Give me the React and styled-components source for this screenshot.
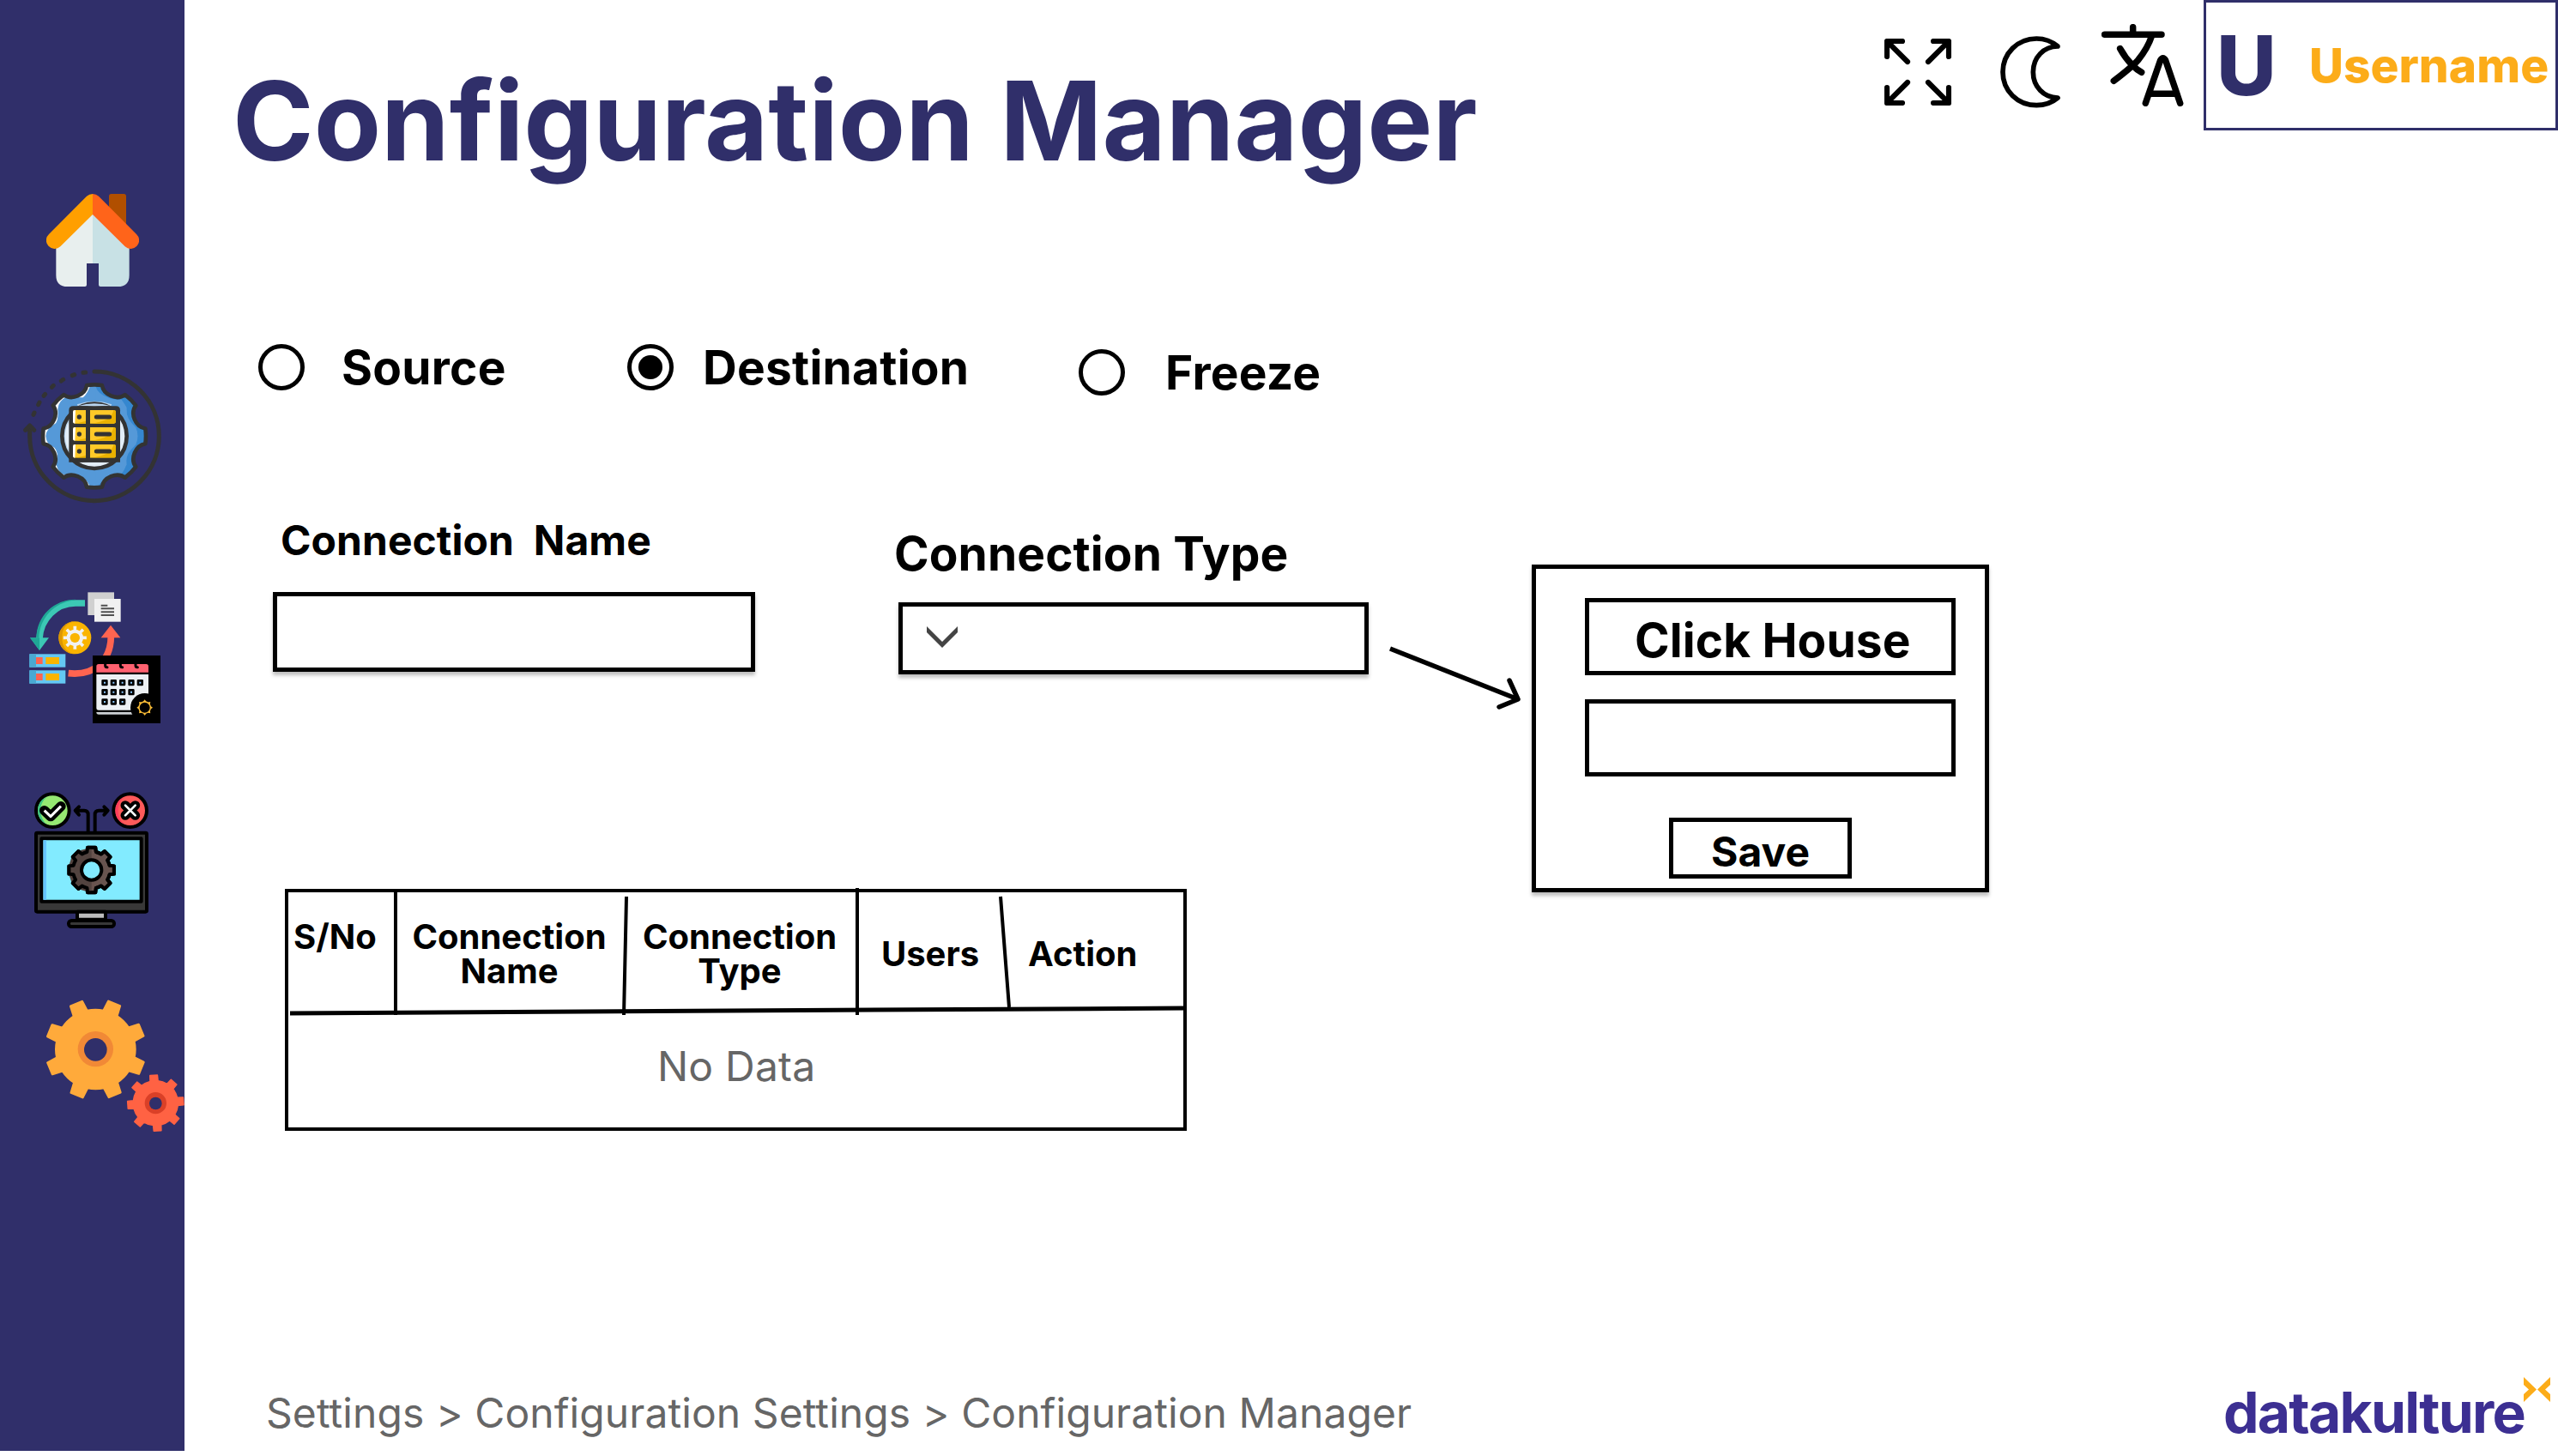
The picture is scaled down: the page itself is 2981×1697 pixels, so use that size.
import React from 'react';
import styled, { createGlobalStyle } from 'styled-components';

const GlobalStyle = createGlobalStyle`
  * { box-sizing: border-box; }
  body {
    margin: 0;
    background: #fff;
    color: #000;
    font-family: Inter, "Liberation Sans", sans-serif;
  }
`;

const NAVY = '#302f6a';
const AMBER = '#fcac19';
const GREY = '#666';

const Page = styled.div`
  display: flex;
  align-items: flex-start;
  width: 2981px;
  height: 1697px;
  overflow: hidden;
`;

const Sidebar = styled.nav`
  display: flex;
  flex-direction: column;
  flex: none;
  width: 215px;
  height: 1691px;
  padding-top: 226px;
  background: ${NAVY};
`;

const NavButton = styled.a`
  display: block;
  flex: none;
  width: ${(p) => p.$w}px;
  height: ${(p) => p.$h}px;
  margin: 0 0 ${(p) => p.$after || 0}px ${(p) => p.$indent}px;

  svg {
    display: block;
    width: 100%;
    height: 100%;
  }
`;

const Main = styled.main`
  display: flex;
  flex-direction: column;
  flex: 1;
  height: 1697px;
`;

const Header = styled.header`
  display: flex;
  align-items: flex-start;
  height: 401px;
`;

const Title = styled.h1`
  margin: 77px auto 0 56px;
  color: ${NAVY};
  font-size: 128px;
  font-weight: 700;
  line-height: 128px;
  letter-spacing: -0.05px;
  white-space: nowrap;
`;

const ToolIcon = styled.svg`
  display: block;
  flex: none;
  width: ${(p) => p.$w}px;
  height: ${(p) => p.$h}px;
  margin: ${(p) => p.$top}px ${(p) => p.$after}px 0 0;
  stroke: #000;
  fill: none;
  stroke-linecap: round;
  stroke-linejoin: round;
`;

const UserBox = styled.div`
  display: flex;
  align-items: center;
  width: 413px;
  height: 152px;
  padding: 0 0 0 12px;
  border: 3px solid ${NAVY};
`;

const Initial = styled.span`
  width: 108px;
  color: ${NAVY};
  font-size: 96px;
  font-weight: 800;
  line-height: 96px;
`;

const Username = styled.span`
  color: ${AMBER};
  font-size: 55px;
  font-weight: 800;
  line-height: 56px;
  white-space: nowrap;
`;

const RadioGroup = styled.div`
  display: flex;
  align-items: flex-start;
  height: 204px;
  padding-left: 86px;
`;

const Radio = styled.label`
  display: flex;
  align-items: center;
  gap: ${(p) => p.$gap}px;
  width: ${(p) => p.$width}px;
  height: 54px;
  margin-top: ${(p) => p.$drop || 0}px;
  font-size: 55px;
  font-weight: 700;
  line-height: 54px;
  letter-spacing: 0.25px;
  white-space: nowrap;
`;

const Dot = styled.span`
  display: grid;
  place-items: center;
  flex: none;
  width: 54px;
  height: 54px;
  border: 5px solid #000;
  border-radius: 50%;

  &::after {
    content: '';
    width: 28px;
    height: 28px;
    border-radius: 50%;
    background: ${(p) => (p.$on ? '#000' : 'transparent')};
  }
`;

const Body = styled.section`
  display: flex;
  align-items: flex-start;
  height: 1030px;
  padding-left: 103px;
`;

const Column = styled.div`
  display: flex;
  flex-direction: column;
  width: 1300px;
`;

const Fields = styled.div`
  display: flex;
  align-items: flex-start;
  height: 431px;
`;

const Field = styled.div`
  display: flex;
  flex-direction: column;
  width: ${(p) => p.$width}px;
  padding-top: ${(p) => p.$top}px;
`;

const FieldLabel = styled.label`
  margin: 0 0 ${(p) => p.$after}px ${(p) => p.$indent}px;
  font-size: ${(p) => p.$size}px;
  font-weight: 700;
  line-height: ${(p) => p.$line}px;
  letter-spacing: ${(p) => p.$track || 0}px;
  white-space: pre;
`;

const Control = styled.div`
  display: flex;
  align-items: center;
  width: ${(p) => p.$w}px;
  height: ${(p) => p.$h}px;
  border: 5px solid #000;
  background: #fff;
  box-shadow: 0 4px 4px rgba(0, 0, 0, 0.25);

  svg {
    display: block;
    width: 36px;
    height: 25px;
    margin: 0 0 3px 28px;
  }
`;

const Arrow = styled.svg`
  display: block;
  flex: none;
  width: 154px;
  height: 76px;
  margin: 147px 13px 0 0;
`;

const Panel = styled.section`
  display: flex;
  flex-direction: column;
  width: 533px;
  height: 382px;
  margin-top: 53px;
  padding: 34px 0 0 57px;
  border: 5px solid #000;
  background: #fff;
  box-shadow: 0 4px 4px rgba(0, 0, 0, 0.25);
`;

const Choice = styled.div`
  width: 432px;
  height: 90px;
  margin-bottom: 28px;
  padding-left: 53px;
  border: 5px solid #000;
  font-size: 55px;
  font-weight: 700;
  line-height: 88px;
  letter-spacing: 0.1px;
  white-space: nowrap;
`;

const SaveButton = styled.button`
  width: 213px;
  height: 71px;
  margin: 20px 0 0 98px;
  padding: 2px 0 0;
  border: 5px solid #000;
  background: #fff;
  color: #000;
  font: 700 48px/66px Inter, "Liberation Sans", sans-serif;
`;

const TableBox = styled.div`
  position: relative;
  display: flex;
  flex-direction: column;
  width: 1051px;
  height: 282px;
  margin-left: 14px;
  border: 4px solid #000;
`;

const HeadRow = styled.div`
  display: grid;
  grid-template-columns: 125px 265px 272px 172px 209px;
  height: 140px;
`;

const HeadCell = styled.div`
  padding-top: ${(p) => p.$top}px;
  padding-left: ${(p) => p.$left || 0}px;
  font-size: 40px;
  font-weight: 700;
  line-height: 40px;
  text-align: ${(p) => p.$align || 'center'};
`;

const Empty = styled.div`
  padding: 39px 0 0 430px;
  color: ${GREY};
  font-size: 48px;
  line-height: 48px;
  letter-spacing: 0.2px;
`;

const Rules = styled.svg`
  position: absolute;
  top: -5px;
  left: -4px;
  width: 1051px;
  height: 160px;
  stroke: #000;
`;

const Footer = styled.footer`
  display: flex;
  align-items: flex-start;
`;

const Crumbs = styled.div`
  margin: -12px auto 0 95px;
  color: ${GREY};
  font-size: 48px;
  line-height: 48px;
  letter-spacing: 0.075px;
  white-space: nowrap;
`;

const Brand = styled.div`
  display: flex;
  align-items: flex-start;
  height: 90px;
  margin: -30px 9px 0 0;
`;

const BrandName = styled.span`
  width: 350px;
  margin-top: 8px;
  color: #3c2f92;
  font-size: 66px;
  font-weight: 700;
  line-height: 66px;
  letter-spacing: -1.8px;
  white-space: nowrap;
`;

const BrandMark = styled.svg`
  display: block;
  flex: none;
  width: 31px;
  height: 29px;
`;

const polar = (cx, cy, r, deg) => {
  const a = (deg * Math.PI) / 180;
  return `${(cx + r * Math.sin(a)).toFixed(1)} ${(cy - r * Math.cos(a)).toFixed(1)}`;
};

// Eight straight-sided teeth.
function toothed(cx, cy, rIn, rOut, halfTop, halfBase, turn = 0) {
  let d = '';
  for (let i = 0; i < 8; i++) {
    const a = i * 45 + turn;
    d += `${i ? 'L' : 'M'}${polar(cx, cy, rIn, a - halfBase)}`;
    d += `L${polar(cx, cy, rOut, a - halfTop)}L${polar(cx, cy, rOut, a + halfTop)}`;
    d += `L${polar(cx, cy, rIn, a + halfBase)}`;
    d += `A${rIn} ${rIn} 0 0 1 ${polar(cx, cy, rIn, a + 45 - halfBase)}`;
  }
  return `${d}Z`;
}

// Eight teeth joined by round hollows.
function scalloped(cx, cy, r, half, rHollow) {
  let d = `M${polar(cx, cy, r, -half)}`;
  for (let i = 0; i < 8; i++) {
    const a = i * 45;
    d += `Q${polar(cx, cy, r + 2, a)} ${polar(cx, cy, r, a + half)}`;
    d += `C${polar(cx, cy, rHollow, a + half + 4)} ${polar(cx, cy, rHollow, a + 41 - half)} ${polar(cx, cy, r, a + 45 - half)}`;
  }
  return `${d}Z`;
}

function HomeIcon() {
  return (
    <svg viewBox="162 78 324 324">
      <path d="M381 160V86q0-8 8-8h44q8 0 8 8v110z" fill="#b14f00" />
      <path d="M196 240L324 130V321H303V396q0 6-6 6H236Q196 402 196 362Z" fill="#e8efee" />
      <path d="M452 240L324 130V321H345V396q0 6 6 6H412Q452 402 452 362Z" fill="#c8e1e5" />
      <path d="M324 78Q312 78 303 86L171 219A29 29 0 0 0 211 262L324 150Z" fill="#ff9f00" />
      <path d="M324 78Q336 78 345 86L477 219A29 29 0 0 1 437 262L324 150Z" fill="#ff641a" />
    </svg>
  );
}

function DataGearIcon() {
  const ink = '#333';
  const outline = scalloped(330, 925, 180, 8.5, 147);
  return (
    <svg viewBox="81 690 486 471" fill="none">
      <defs>
        <clipPath id="gearClip"><path d={outline} /></clipPath>
      </defs>
      <path d="M330 699A226 226 0 1 1 104 925V890" stroke={ink} strokeWidth="15" strokeLinecap="round" />
      <path d="M89 904L104 888L119 904" stroke={ink} strokeWidth="15" strokeLinecap="round" strokeLinejoin="round" />
      <g stroke={ink} strokeWidth="15" strokeLinecap="round">
        <path d="M291 703l8-1M253 713l7-3M214 732l7-5M181 754l6-6M153 784l5-6M134 815l4-8M117 850l3-7" />
      </g>
      <g clipPath="url(#gearClip)">
        <rect x="140" y="735" width="380" height="380" fill="#fff" />
        <path d="M318 740Q308 775 290 790L232 788Q205 800 202 830Q205 865 195 880Q160 900 160 925Q162 955 190 965Q208 985 196 1020Q205 1065 240 1060Q300 1055 318 1110H520V740Z" fill="#5599d8" />
        <path d="M332 740Q340 780 370 790Q400 800 425 797Q450 830 440 850Q450 875 475 895Q488 925 475 955Q450 970 438 1000Q450 1025 425 1056Q385 1060 365 1080Q345 1090 335 1115H520V740Z" fill="#3587cf" />
        <path d="M335 760Q360 790 400 797Q432 800 443 825Q438 860 470 890Q490 925 470 960Q436 990 443 1025Q425 1050 395 1055Q350 1065 335 1090V760Z" fill="#5599d8" />
      </g>
      <path d={outline} stroke={ink} strokeWidth="14" strokeLinejoin="round" />
      <circle cx="330" cy="925" r="112" fill="#e2edf7" />
      <path d="M250 1000A110 110 0 0 1 250 850M272 820Q330 800 388 820" stroke="#b8d4ef" strokeWidth="14" />
      <circle cx="330" cy="925" r="113" stroke={ink} strokeWidth="14" />
      <path d="M272 820Q330 802 388 820Z" fill="#b8d4ef" />
      <path d="M241 835Q241 820 256 820H405Q420 820 420 835V1016H241Z" fill={ink} />
      {[834, 894, 954].map((y) => (
        <g key={y}>
          <path d={`M300 ${y}H262Q255 ${y} 255 ${y + 7}V${y + 40}Q255 ${y + 47} 262 ${y + 47}H300Z`} fill="#ffc928" />
          <path d={`M262 ${y}Q255 ${y} 255 ${y + 7}V${y + 40}Q255 ${y + 47} 262 ${y + 47}L264 ${y}Z`} fill="#fff" />
          <path d={`M315 ${y}H398Q405 ${y} 405 ${y + 7}V${y + 40}Q405 ${y + 47} 398 ${y + 47}H315Z`} fill="#ffc928" />
          <path d={`M405 ${y + 3}V${y + 40}Q405 ${y + 47} 398 ${y + 47}H315Q390 ${y + 40} 397 ${y}Z`} fill="#eab200" />
          <path d={`M300 ${y + 38}V${y + 47}H264Z`} fill="#eab200" />
          <circle cx="277" cy={y + 24} r="8" fill={ink} />
          <path d={`M337 ${y + 24}H383`} stroke={ink} strokeWidth="15" strokeLinecap="round" />
        </g>
      ))}
      <path d="M262 1009H400" stroke={ink} strokeWidth="15" />
    </svg>
  );
}

function ScheduleIcon() {
  return (
    <svg viewBox="102 90 459 459" fill="none">
      <path d="M297 129H264C195 129 142 185 138 252" stroke="#3cc8b4" strokeWidth="23" />
      <path d="M264 116C190 116 128 172 127 252H136C138 180 190 126 258 119Z" fill="#1fa796" />
      <path d="M105 250H171L138 294Z" fill="#3cc8b4" />
      <path d="M105 250H138V294Z" fill="#1fa796" />
      <path d="M239 374C330 384 387 330 388 245" stroke="#ff6450" strokeWidth="23" />
      <path d="M353 250L387 206L421 250Z" fill="#ff6450" />
      <rect x="307" y="91" width="92" height="80" fill="#d0d0d0" />
      <rect x="330" y="114" width="92" height="80" fill="#f1f1f1" />
      <path d="M353 137H376M353 148H399M353 160H399M353 171H399" stroke="#505050" strokeWidth="6" />
      <circle cx="262" cy="250" r="57" fill="#fab400" />
      <path d="M262 193A57 57 0 0 0 262 307Q217 300 217 250T262 193Z" fill="#dc9600" />
      <path d={toothed(262, 250, 28, 41, 8, 11)} fill="#f1f1f1" />
      <circle cx="262" cy="250" r="23" fill="#f1f1f1" stroke="#f1f1f1" strokeWidth="12" />
      <circle cx="262" cy="250" r="17" fill="#fab400" />
      {[307, 364].map((y) => (
        <g key={y}>
          <rect x="103" y={y} width="126" height="46" fill="#64c8f3" />
          <rect x="103" y={y} width="23" height="46" fill="#4aa9d2" />
          <rect x="126" y={y + 11} width="23" height="24" fill="#ff6450" />
          <rect x="160" y={y + 11} width="47" height="24" fill="#fab400" />
        </g>
      ))}
      <rect x="324" y="312" width="237" height="237" fill="#000" />
      <path d="M337 371V350Q337 342 345 342H511Q519 342 519 350V371Z" fill="#ff6170" />
      <path d="M337 378H519V450H500V503H345Q337 503 337 495Z" fill="#ecf0f4" />
      <path d="M337 510H470V518H345Q337 518 337 510Z" fill="#ccd0d4" />
      <circle cx="506" cy="494" r="50" fill="#000" />
      <path d="M368 341V347Q368 353 375 353M421 341V347Q421 353 428 353M474 341V347Q474 353 481 353" stroke="#000" strokeWidth="9" strokeLinecap="round" />
      {[[407, 5], [440, 4], [474, 3]].map(([y, n]) =>
        Array.from({ length: n }, (_, i) => (
          <rect key={`${y}-${i}`} x={359 + i * 31} y={y - 7} width="14" height="14" fill="#8ccaff" stroke="#000" strokeWidth="8" strokeLinejoin="round" />
        ))
      )}
      <circle cx="506" cy="494" r="20" stroke="#fdbf38" strokeWidth="4" />
      {[0, 45, 90, 135, 180, 225, 270, 315].map((a) => (
        <path key={a} d="M500 474L506 466L512 474Z" fill="#fdbf38" transform={`rotate(${a} 506 494)`} />
      ))}
    </svg>
  );
}

function MonitorIcon() {
  return (
    <svg viewBox="117 66 405 480" fill="none" stroke="#000" strokeWidth="12" strokeLinecap="round" strokeLinejoin="round">
      <circle cx="184" cy="134" r="58" fill="#96e872" />
      <path d="M164 86Q132 100 132 134T164 182Q142 165 142 134T164 86Z" fill="#3ec482" stroke="none" />
      <path d="M155 134L177 155L213 119" strokeWidth="34" />
      <path d="M155 134L177 155L213 119" stroke="#fff" strokeWidth="9" strokeLinecap="butt" />
      <circle cx="455" cy="134" r="58" fill="#ff5a5a" />
      <path d="M435 86Q403 100 403 134T435 182Q413 165 413 134T435 86Z" fill="#ff3d5c" stroke="none" />
      <path d="M438 116L473 151M473 116L438 151" strokeWidth="33" />
      <path d="M438 116L473 151M473 116L438 151" stroke="#fff" strokeWidth="8" />
      <path d="M308 212V148Q308 134 294 134H264M276 121L263 134L276 149M332 212V148Q332 134 346 134H376M364 121L377 134L364 149" />
      <rect x="126" y="212" width="387" height="276" rx="4" fill="#383838" />
      <rect x="145" y="232" width="349" height="220" fill="#82ebff" />
      <rect x="152" y="238" width="10" height="208" fill="#66c6ff" stroke="none" />
      <path d={toothed(320, 342, 65, 80, 10, 14)} fill="#68544f" />
      <path d="M320 262V422L300 416L262 405L250 385L240 355V330L252 290L272 275L303 268Z" fill="#52433f" stroke="none" />
      <path d={toothed(320, 342, 65, 80, 10, 14)} />
      <circle cx="320" cy="342" r="35" fill="#82ebff" />
      <path d="M270 492V515H369V492" fill="#bdbdbd" />
      <path d="M270 488H369" />
      <rect x="240" y="519" width="159" height="21" rx="10" fill="#383838" />
    </svg>
  );
}

function GearsIcon() {
  return (
    <svg viewBox="159 792 486 468">
      <g fill="#ffaa3b" stroke="#ffaa3b" strokeWidth="8" strokeLinejoin="round">
        <path d={toothed(334, 969, 138, 174, 7.2, 10.5, 22.2)} />
      </g>
      <circle cx="334" cy="968" r="62" fill="#f18936" />
      <circle cx="334" cy="970" r="40" fill={NAVY} />
      <g fill="#ff6243" stroke="#ff6243" strokeWidth="5" strokeLinejoin="round">
        <path d={toothed(544, 1157, 78, 98, 7.5, 10, -4)} />
      </g>
      <circle cx="544" cy="1157" r="38" fill="#da4027" />
      <circle cx="544" cy="1158" r="22" fill={NAVY} />
    </svg>
  );
}

function Tools() {
  return (
    <>
      <ToolIcon $w={78} $h={78} $top={45} $after={57} viewBox="48 90 234 234" strokeWidth="18.5">
        <path d="M57 153V99H111M61 103L129 171M219 99H273V153M269 103L201 171M57 261V315H111M61 311L129 243M219 315H273V261M269 311L201 243" />
      </ToolIcon>
      <ToolIcon $w={70} $h={84} $top={42} $after={48} viewBox="453 81 210 252" strokeWidth="17">
        <path d="M654 117C635 101 610 90 580 90C513 90 462 142 462 207S513 323 580 323C610 323 635 313 654 297C605 296 568 258 568 207S605 117 654 117Z" />
      </ToolIcon>
      <ToolIcon $w={96} $h={96} $top={28} $after={23} viewBox="807 39 288 288" strokeWidth="22.5">
        <path d="M818 76H1017M917 50V76M983 80Q968 125 935 165Q915 188 850 238M872 125Q890 158 915 183Q930 198 947 208M961 316L1013 166Q1022 150 1031 166L1082 316M978 283H1065" />
      </ToolIcon>
    </>
  );
}

export default function App() {
  return (
    <>
      <GlobalStyle />
      <Page>
        <Sidebar>
          <NavButton $w={108} $h={108} $indent={54} $after={96}><HomeIcon /></NavButton>
          <NavButton $w={162} $h={157} $indent={27} $after={103}><DataGearIcon /></NavButton>
          <NavButton $w={153} $h={153} $indent={34} $after={79}><ScheduleIcon /></NavButton>
          <NavButton $w={135} $h={160} $indent={39} $after={82}><MonitorIcon /></NavButton>
          <NavButton $w={162} $h={156} $indent={53}><GearsIcon /></NavButton>
        </Sidebar>
        <Main>
          <Header>
            <Title>Configuration Manager</Title>
            <Tools />
            <UserBox>
              <Initial>U</Initial>
              <Username>Username</Username>
            </UserBox>
          </Header>
          <RadioGroup>
            <Radio $gap={43} $width={430}><Dot />Source</Radio>
            <Radio $gap={34} $width={526}><Dot $on />Destination</Radio>
            <Radio $gap={47} $width={320} $drop={6}><Dot />Freeze</Radio>
          </RadioGroup>
          <Body>
            <Column>
              <Fields>
                <Field $width={729} $top={1}>
                  <FieldLabel $size={48} $line={48} $indent={9} $after={36} $track={0.05}>{'Connection  Name'}</FieldLabel>
                  <Control $w={562} $h={93} />
                </Field>
                <Field $width={560} $top={12}>
                  <FieldLabel $size={55} $line={56} $indent={-5} $after={29} $track={0.1}>Connection Type</FieldLabel>
                  <Control $w={548} $h={84}>
                    <svg viewBox="0 0 36 25"><path d="M0 0L18 18L36 0V7L18 25L0 7Z" fill="#444" /></svg>
                  </Control>
                </Field>
              </Fields>
              <TableBox>
                <HeadRow>
                  <HeadCell $top={32} $left={6} $align="left">S/No</HeadCell>
                  <HeadCell $top={32}>Connection<br />Name</HeadCell>
                  <HeadCell $top={32}>Connection<br />Type</HeadCell>
                  <HeadCell $top={52}>Users</HeadCell>
                  <HeadCell $top={52} $left={28} $align="left">Action</HeadCell>
                </HeadRow>
                <Empty>No Data</Empty>
                <Rules viewBox="0 0 1051 160" fill="none" strokeWidth="4">
                  <path d="M129 3V148M398 10L395 148M667 0V148M834 10L844 139" />
                  <path d="M6 146L1049 140" strokeWidth="5" />
                </Rules>
              </TableBox>
            </Column>
            <Arrow viewBox="0 0 154 76" fill="none" stroke="#000" strokeWidth="5.5" strokeLinejoin="round">
              <path d="M2 4L151 63" />
              <path d="M141 41L151 63L129 72" strokeLinecap="round" />
            </Arrow>
            <Panel>
              <Choice>Click House</Choice>
              <Choice />
              <SaveButton>Save</SaveButton>
            </Panel>
          </Body>
          <Footer>
            <Crumbs>Settings &gt; Configuration Settings &gt; Configuration Manager</Crumbs>
            <Brand>
              <BrandName>datakulture</BrandName>
              <BrandMark viewBox="0 0 31 29" fill={AMBER}>
                <path d="M0 0L15 14.5L0 29V20L6 14.5L0 9ZM31 0L16 14.5L31 29V20L25 14.5L31 9Z" />
              </BrandMark>
            </Brand>
          </Footer>
        </Main>
      </Page>
    </>
  );
}
